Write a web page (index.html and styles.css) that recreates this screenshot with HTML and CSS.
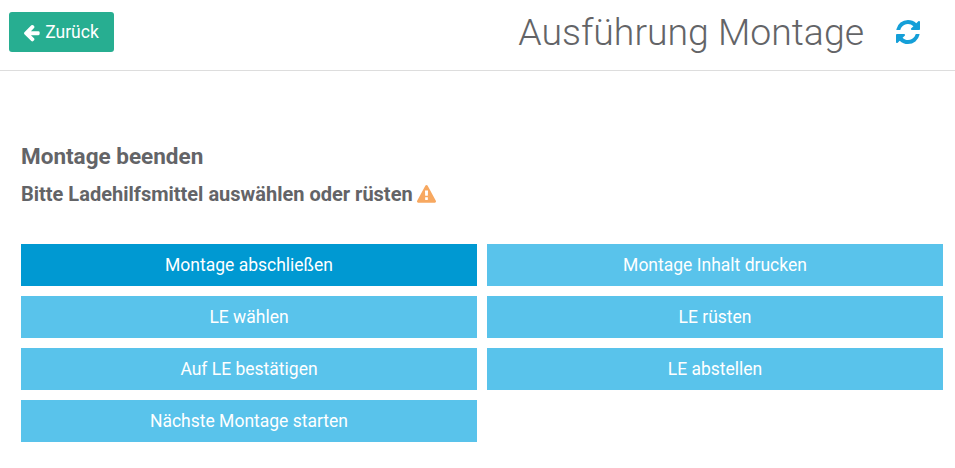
FILE: index.html
```html
<!DOCTYPE html>
<html lang="de">

<head>
    <meta charset="UTF-8">
    <meta name="viewport" content="width=device-width, initial-scale=1.0">
    <title>Ausführung Montage</title>
    <link rel="stylesheet" href="styles.css">
</head>

<body>
    <header class="header">
        <button class="back">
            <svg class="back-icon" viewBox="0 0 1792 1792"><path d="M1664 896v128q0 53-32.500 90.500t-84.500 37.500h-704l293 294q38 36 38 90t-38 90l-75 76q-37 37-90 37-52 0-91-37l-651-652q-37-37-37-90 0-52 37-91l651-650q38-38 91-38 52 0 90 38l75 74q38 38 38 91t-38 91l-293 293h704q52 0 84.500 37.500t32.500 90.500z"/></svg>
            Zurück
        </button>
        <h1 class="title">Ausführung Montage</h1>
        <svg class="refresh" viewBox="0 0 1792 1792"><path d="M1639 1056q0 5-1 7-64 268-268 434.500t-478 166.500q-146 0-282.500-55t-243.500-157l-129 129q-19 19-45 19t-45-19-19-45v-448q0-26 19-45t45-19h448q26 0 45 19t19 45-19 45l-137 137q71 66 161 102t187 36q134 0 250-65t186-179q11-17 53-117 8-23 30-23h192q13 0 22.500 9.500t9.500 22.500zm25-800v448q0 26-19 45t-45 19h-448q-26 0-45-19t-19-45 19-45l138-138q-148-137-349-137-134 0-250 65t-186 179q-11 17-53 117-8 23-30 23h-199q-13 0-22.500-9.500t-9.500-22.500v-7q65-268 270-434.500t480-166.500q146 0 284 55.500t245 156.500l130-129q19-19 45-19t45 19 19 45z"/></svg>
    </header>

    <main class="content">
        <h2 class="heading">Montage beenden</h2>
        <p class="notice">
            Bitte Ladehilfsmittel auswählen oder rüsten
            <svg class="warn" viewBox="0 0 1792 1792"><path d="M1024 1375v-190q0-14-9.500-23.500t-22.500-9.500h-192q-13 0-22.500 9.500t-9.500 23.500v190q0 14 9.500 23.500t22.500 9.500h192q13 0 22.500-9.500t9.500-23.500zm-2-374l18-459q0-12-10-19-13-11-24-11h-220q-11 0-24 11-10 7-10 21l17 457q0 10 10 16.500t24 6.500h185q14 0 23.500-6.500t10.500-16.500zm-14-934l768 1408q35 63-2 126-17 29-46.500 46t-63.500 17h-1536q-34 0-63.500-17t-46.500-46q-37-63-2-126l768-1408q17-31 47-49t65-18 65 18 47 49z"/></svg>
        </p>
        <div class="actions">
            <button class="action primary">Montage abschließen</button>
            <button class="action">Montage Inhalt drucken</button>
            <button class="action">LE wählen</button>
            <button class="action">LE rüsten</button>
            <button class="action">Auf LE bestätigen</button>
            <button class="action">LE abstellen</button>
            <button class="action">Nächste Montage starten</button>
        </div>
    </main>
</body>

</html>
```

FILE: styles.css
```css
body {
    margin: 0;
    background: white;
    color: #636467;
    font-family: 'Roboto', sans-serif;
}

.header {
    display: flex;
    align-items: center;
    height: 71px;
    padding: 0 33px 6px 9px;
    box-sizing: border-box;
    border-bottom: 1px solid #dddddd;
}

.back {
    display: flex;
    align-items: center;
    justify-content: center;
    gap: 4px;
    width: 105px;
    height: 40px;
    padding: 0 2px 0 0;
    background-color: #27ae91;
    color: #fff;
    font-family: inherit;
    font-size: 17.5px;
    border: none;
    border-radius: 3px;
}

.back-icon {
    width: 19px;
    height: 19px;
    fill: #fff;
}

.title {
    margin: 0 30px 0 auto;
    font-size: 37.4px;
    font-weight: 300;
    line-height: 42px;
}

.refresh {
    width: 28px;
    height: 28px;
    margin-top: -1px;
    fill: #149fd8;
}

.content {
    padding: 72px 12px 0 21px;
}

.heading {
    margin: 0 0 14px;
    font-size: 22.5px;
    font-weight: 700;
    line-height: 26px;
}

.notice {
    display: flex;
    align-items: center;
    gap: 4px;
    margin: 0 0 38px;
    font-size: 20px;
    font-weight: 700;
    line-height: 23px;
}

.warn {
    width: 19px;
    height: 19px;
    fill: #f7a860;
}

.actions {
    display: grid;
    grid-template-columns: repeat(2, 1fr);
    gap: 10px;
}

.action {
    height: 42px;
    padding: 0;
    background-color: #59c3eb;
    color: #fff;
    font-family: inherit;
    font-size: 17.5px;
    font-weight: 400;
    border: none;
}

.primary {
    background-color: #0099d2;
}
```
